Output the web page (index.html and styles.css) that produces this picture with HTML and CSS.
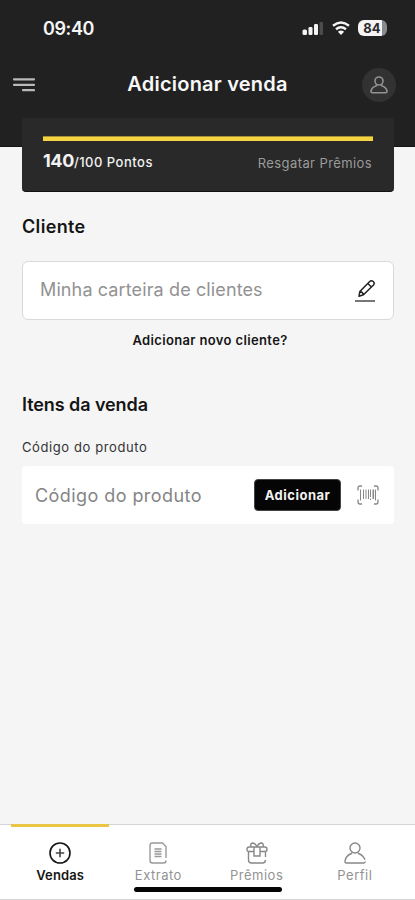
FILE: index.html
```html
<!DOCTYPE html>
<html lang="pt-BR">
<head>
<meta charset="utf-8">
<meta name="viewport" content="width=device-width, initial-scale=1">
<title>Adicionar venda</title>
<link rel="stylesheet" href="styles.css">
</head>
<body>
<div class="app">
  <header class="header">
    <div class="status">
      <span class="clock">09:40</span>
      <div class="indicators">
        <svg width="22" height="16" viewBox="0 0 22 16"><g fill="#f4f4f4"><rect x="0.500" y="9.500" width="4.500" height="5.500" rx="1.500"/><rect x="6.500" y="7" width="4" height="8" rx="1.300"/><rect x="12" y="4" width="4" height="11" rx="1.300"/></g><rect x="17.500" y="2" width="3.500" height="13" rx="1.300" fill="#4c4c4c"/></svg>
        <svg width="18" height="16" viewBox="0 0 18 16" fill="none" stroke="#f4f4f4" stroke-width="2.400"><path d="M1 5.700Q9-.7 17 5.700M4 9.200Q9 5.200 14 9.200"/><path d="M9 15 5.900 11.700Q9 9.400 12.100 11.700Z" fill="#f4f4f4" stroke="none"/></svg>
        <span class="battery">84</span>
      </div>
    </div>
    <div class="toolbar">
      <svg width="22" height="16" viewBox="0 0 22 16" fill="none" stroke="#b9b9b9" stroke-width="2.200" stroke-linecap="round"><path d="M1 2.300H21M1 7.800H21M10 13.200H21"/></svg>
      <h1>Adicionar venda</h1>
      <span class="avatar"><svg width="18" height="20" viewBox="0 0 18 20" fill="none" stroke="#929292" stroke-width="1.600"><circle cx="9" cy="6" r="4"/><path d="M6.200 9.500V10.800C3.500 11.600 1.600 13.500 1 16Q.8 17.800 2.500 17.800H15.500Q17.200 17.800 17 16C16.400 13.500 14.500 11.600 11.800 10.800V9.500"/></svg></span>
    </div>
  </header>

  <main class="content">
    <section class="points">
      <div class="progress"></div>
      <div class="points-row">
        <p><b>140</b><span class="goal">/100 Pontos</span></p>
        <a class="redeem">Resgatar Prêmios</a>
      </div>
    </section>

    <h2 class="client-title">Cliente</h2>
    <div class="field client-field">
      <span class="client-placeholder">Minha carteira de clientes</span>
      <svg width="22" height="24" viewBox="0 0 22 24" fill="none" stroke="#222" stroke-width="1.500" stroke-linejoin="round"><path d="M5 17.300 5.800 12.600 15.500 2.700Q17.300.9 19.300 2.500 21 4.200 19.500 6L9.500 15.800ZM13.800 4.500 17.500 8M5.800 12.600Q8.500 12.800 9.500 15.800"/><path d="M1 22H21" stroke="#777" stroke-width="2"/></svg>
    </div>
    <a class="new-client">Adicionar novo cliente?</a>

    <h2 class="items-title">Itens da venda</h2>
    <label class="code-label">Código do produto</label>
    <div class="field code-field">
      <span class="code-placeholder">Código do produto</span>
      <button class="add">Adicionar</button>
      <svg width="22" height="20" viewBox="0 0 22 20" fill="none" stroke="#888" stroke-width="1.300"><path d="M5 1H3Q1 1 1 3V5.500M17 1H19Q21 1 21 3V5.500M1 14.500V17Q1 19 3 19H5M21 14.500V17Q21 19 19 19H17"/><path d="M3.500 4.500V15.500M6.500 4.500V14M9 4.500V14M11.500 4.500V14M13.500 4.500V12M13.500 13.500V15M18.500 4.500V15.500" stroke-width="1"/><path d="M16.300 4.500V14" stroke-width="1.600"/></svg>
    </div>
  </main>

  <nav class="tabs">
    <a class="tab active">
      <svg width="22" height="22" viewBox="0 0 22 22" fill="none" stroke="#151515" stroke-width="1.600"><circle cx="11" cy="11" r="10"/><path d="M11 6.800V15.200M6.800 11H15.200" stroke="#444"/></svg>
      <span>Vendas</span>
    </a>
    <a class="tab">
      <svg width="22" height="22" viewBox="0 0 22 22" fill="none" stroke="#999" stroke-width="1.400"><path d="M19 16V4.500L15.500 1H5.500Q3 1 3 3.500V18.500Q3 21 5.500 21H16.500Q19 21 19 18.500"/><path d="M7.500 7H14.500M7.500 9.500H14.500M7.500 12H14.500M7.500 14.500H14.500"/></svg>
      <span>Extrato</span>
    </a>
    <a class="tab">
      <svg width="22" height="22" viewBox="0 0 22 22" fill="none" stroke="#888" stroke-width="1.400"><path d="M8 9.500H3Q1 9.500 1 7.500 1 5 3 5H19Q21 5 21 7.500 21 9.500 19 9.500H14M2.500 9.500V18Q2.500 21 5.500 21H16.500Q19.500 21 19.500 18M19.500 9.500V15M8 5V14H14V5M11 5Q9.500 1 6.500 1 4 1.500 5 5M11 5Q12.500 1 15.500 1 18 1.500 17 5"/></svg>
      <span>Prêmios</span>
    </a>
    <a class="tab">
      <svg width="22" height="22" viewBox="0 0 22 22" fill="none" stroke="#888" stroke-width="1.400"><circle cx="11" cy="6" r="5"/><path d="M7.500 10.500V11.500C4 12.800 1.500 15.500 1 19Q.8 21 2.500 21H19.500Q21.400 21 21 19.500M21 17.800C19.800 14.800 17.500 12.500 14.500 11.500V10.500"/></svg>
      <span>Perfil</span>
    </a>
    <i class="home-bar"></i>
  </nav>
</div>
</body>
</html>
```
FILE: styles.css
```css
* { box-sizing: border-box; }
body { margin: 0; font-family: Inter, "Liberation Sans", sans-serif; color: #151515; }
h1, h2, p { margin: 0; }
svg { display: block; flex: none; }
span, a, h1, h2, label, button { white-space: nowrap; }
.app { height: 900px; display: flex; flex-direction: column; background: #f5f5f5; overflow: hidden; }

.header { height: 147px; flex: none; background: #212121; border-bottom: 1px solid #151515; }
.status { height: 56px; padding: 0 28px 0 43px; display: flex; align-items: center; justify-content: space-between; }
.clock { font-size: 18px; font-weight: 600; color: #f6f6f6; letter-spacing: -.4px; }
.indicators { display: flex; align-items: center; gap: 8px; }
.battery { width: 29px; height: 16px; border-radius: 6px; background: linear-gradient(90deg, #f4f4f4 84%, #8a8a8a 84%); color: #2b2b2b; font-size: 13px; line-height: 16px; font-weight: 700; text-align: center; padding-right: 1px; }
.toolbar { height: 58px; padding: 0 19px 0 13px; display: flex; align-items: center; justify-content: space-between; }
.toolbar h1 { font-size: 20px; font-weight: 600; color: #f8f8f8; margin: -2px 0 0 18px; letter-spacing: .22px; }
.avatar { width: 34px; height: 34px; border-radius: 50%; background: #323232; display: flex; align-items: center; justify-content: center; }

.content { flex: 1; padding: 0 21px 0 22px; display: flex; flex-direction: column; }
.points { height: 74px; margin-top: -29px; padding: 18px 21px 0; background: #292929; border-bottom: 1px solid #111; border-radius: 2px 2px 4px 4px; }
.progress { height: 5px; background: #f4d440; border-top: 1px solid #a58f35; }
.points-row { display: flex; justify-content: space-between; margin-top: 8px; line-height: 24px; color: #f2f2f2; }
.points p { display: flex; align-items: baseline; }
.points b { font-size: 18px; font-weight: 700; letter-spacing: -.4px; }
.goal { font-size: 13px; font-weight: 500; letter-spacing: .5px; }
.redeem { font-size: 13px; color: #9b9b9b; line-height: 28px; letter-spacing: .4px; margin-right: 1px; }

h2 { font-size: 18px; line-height: 24px; font-weight: 600; letter-spacing: -.08px; }
.client-title { margin-top: 23px; letter-spacing: .35px; }
.points-row { height: 24px; }
.field { height: 58px; display: flex; align-items: center; background: #fff; color: #929292; font-size: 18px; }
.client-field { height: 59px; margin-top: 22px; padding: 0 17px; border: 1px solid #d9d9d9; border-radius: 6px; justify-content: space-between; }
.client-placeholder { letter-spacing: .12px; padding-bottom: 2px; }
.new-client { align-self: center; margin-top: 10px; margin-left: 4px; font-size: 13px; font-weight: 600; line-height: 20px; letter-spacing: .36px; }
.items-title { margin-top: 43px; }
.code-label { font-size: 13px; line-height: 20px; margin-top: 20px; color: #333; letter-spacing: .6px; }
.code-field { margin-top: 9px; padding: 0 15px 0 13px; border-radius: 4px; color: #858585; }
.code-placeholder { letter-spacing: .43px; }
.add { width: 87px; height: 32px; margin: 0 16px 0 auto; padding: 0; border: 1px solid #444; border-radius: 4px; background: #050505; color: #f3f3f3; font: 700 13px Inter, sans-serif; letter-spacing: .5px; }

.tabs { position: relative; height: 76px; flex: none; padding: 0 11px; display: grid; grid-template-columns: repeat(4, 1fr); background: #fff; border-top: 1px solid #d4d4d4; border-bottom: 1px solid #d4d4d4; }
.tab { display: flex; flex-direction: column; align-items: center; margin-top: -1px; padding-top: 15px; gap: 1px; border-top: 3px solid transparent; font-size: 13px; line-height: 20px; letter-spacing: .5px; color: #929292; }
.tab.active { border-color: #e9c643; color: #151515; font-weight: 600; letter-spacing: .1px; }
.home-bar { position: absolute; left: 134px; top: 62px; width: 148px; height: 5px; border-radius: 3px; background: #050505; }
```
